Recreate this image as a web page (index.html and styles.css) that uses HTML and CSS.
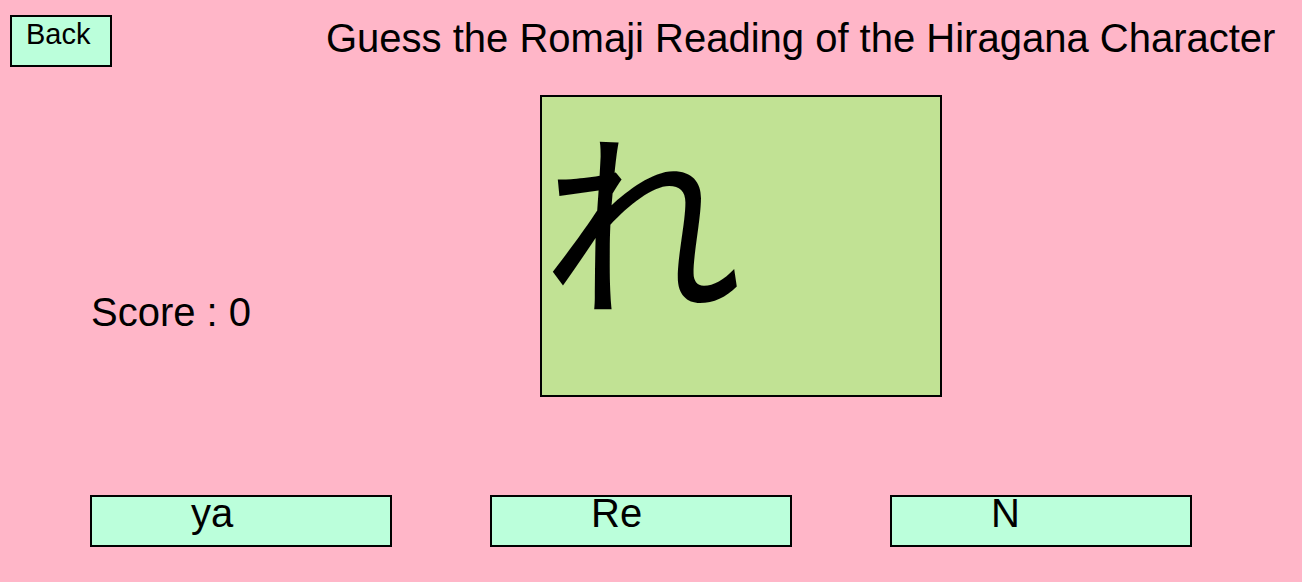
FILE: index.html
```html
<!DOCTYPE html>
<html>

<head>
  <meta charset="utf-8">
  <title>Hiragana quiz</title>
  <link rel="stylesheet" href="styles.css">
</head>

<body>
  <div class="top">
    <button class="back">Back</button>
    <div class="title">Guess the Romaji Reading of the Hiragana Character</div>
  </div>

  <div class="middle">
    <div class="score">Score : 0</div>
    <div class="card"><span class="kana">れ</span></div>
  </div>

  <div class="answers">
    <button class="answer">ya</button>
    <button class="answer">Re</button>
    <button class="answer">N</button>
  </div>
</body>

</html>
```

FILE: styles.css
```css
body {
  margin: 0;
  background: #ffb6c8;
  font-family: "Liberation Sans", Arial, sans-serif;
  color: #000;
}

button {
  font-family: "Liberation Sans", Arial, sans-serif;
  color: #000;
  background: #bbffdb;
  border: 2px solid #000;
  border-radius: 0;
  margin: 0;
  text-align: left;
  cursor: pointer;
}

.top {
  display: flex;
  align-items: flex-start;
  padding-top: 15px;
  padding-left: 10px;
}

.back {
  width: 102px;
  height: 52px;
  padding: 0 0 0 14px;
  font-size: 29px;
  line-height: 34px;
  display: flex;
  align-items: flex-start;
}

.title {
  margin-left: 214px;
  font-size: 40px;
  line-height: 46px;
  white-space: nowrap;
}

.middle {
  display: flex;
  align-items: flex-start;
  padding-left: 91px;
  margin-top: 28px;
}

.score {
  width: 449px;
  margin-top: 194px;
  font-size: 40px;
  line-height: 46px;
}

.card {
  width: 402px;
  height: 302px;
  box-sizing: border-box;
  border: 2px solid #000;
  background: #c1e294;
  padding: 17px 0 0 0;
}

.kana {
  display: block;
  font-family: "Noto Sans CJK JP", sans-serif;
  font-size: 200px;
  line-height: 1;
}

.answers {
  display: flex;
  gap: 98px;
  padding-left: 90px;
  margin-top: 98px;
}

.answer {
  width: 302px;
  height: 52px;
  padding: 0 0 0 99px;
  font-size: 40px;
  line-height: 32px;
  display: flex;
  align-items: flex-start;
}
```
